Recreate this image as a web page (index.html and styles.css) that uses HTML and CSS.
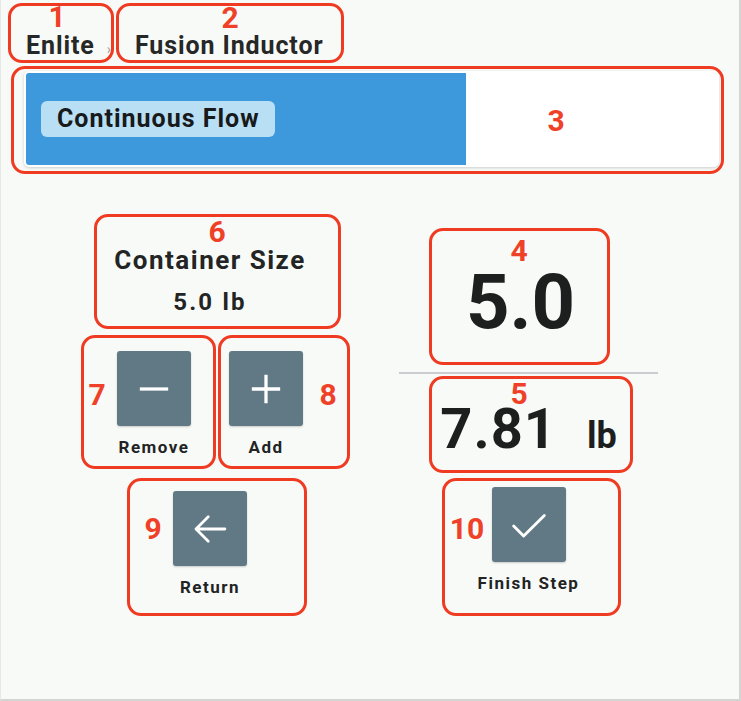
FILE: index.html
```html
<!DOCTYPE html>
<html lang="en">
<head>
<meta charset="utf-8">
<title>Continuous Flow</title>
<link rel="stylesheet" href="styles.css">
</head>
<body>
<div class="frame">
  <nav class="crumbs">
    <span class="crumb">Enlite</span>
    <span class="sep">›</span>
    <span class="crumb">Fusion Inductor</span>
  </nav>

  <div class="progress">
    <div class="fill" style="width:63.7%">
      <span class="chip">Continuous Flow</span>
    </div>
  </div>

  <main class="panel">
    <section class="col left">
      <div class="size">
        <div class="size-title">Container Size</div>
        <div class="size-value">5.0 lb</div>
      </div>
      <div class="btn-row">
        <div class="btn">
          <div class="sq">
            <svg viewBox="0 0 24 24" width="34" height="34"><path d="M2 12h20" stroke="#fff" stroke-width="2.3" fill="none"/></svg>
          </div>
          <div class="btn-label">Remove</div>
        </div>
        <div class="btn">
          <div class="sq">
            <svg viewBox="0 0 24 24" width="34" height="34"><path d="M2 12h20M12 2v20" stroke="#fff" stroke-width="2.3" fill="none"/></svg>
          </div>
          <div class="btn-label">Add</div>
        </div>
      </div>
      <div class="btn single">
        <div class="sq">
          <svg viewBox="0 0 24 24" width="42" height="42"><path d="M20.5 12H4M11 5l-7 7 7 7" stroke="#fff" stroke-width="1.6" fill="none" stroke-linecap="round" stroke-linejoin="round"/></svg>
        </div>
        <div class="btn-label">Return</div>
      </div>
    </section>

    <section class="col right">
      <div class="big">5.0</div>
      <div class="divider"></div>
      <div class="reading"><span class="num">7.81</span><span class="unit">lb</span></div>
      <div class="btn finish">
        <div class="sq">
          <svg viewBox="0 0 24 24" width="46" height="46"><path d="M4 12.5l5.2 5.2L20 7" stroke="#fff" stroke-width="1.5" fill="none" stroke-linecap="round" stroke-linejoin="round"/></svg>
        </div>
        <div class="btn-label">Finish Step</div>
      </div>
    </section>
  </main>

  <div class="marks">
    <div class="box b1"></div><span class="tag t1">1</span>
    <div class="box b2"></div><span class="tag t2">2</span>
    <div class="box b3"></div><span class="tag t3">3</span>
    <div class="box b4"></div><span class="tag t4">4</span>
    <div class="box b5"></div><span class="tag t5">5</span>
    <div class="box b6"></div><span class="tag t6">6</span>
    <div class="box b7"></div><span class="tag t7">7</span>
    <div class="box b8"></div><span class="tag t8">8</span>
    <div class="box b9"></div><span class="tag t9">9</span>
    <div class="box b10"></div><span class="tag t10">10</span>
  </div>
</div>
</body>
</html>
```

FILE: styles.css
```css
* { box-sizing: border-box; }
html, body { margin: 0; padding: 0; }
body {
  background: #ffffff;
  font-family: Roboto, "Liberation Sans", sans-serif;
  color: #1e1f1f;
}
.frame {
  position: relative;
  width: 741px;
  height: 701px;
  background: #f8faf8;
  border-right: 2px solid #d3d5d3;
  border-bottom: 2px solid #d3d5d3;
  border-left: 1px solid #e6e8e6;
  overflow: hidden;
}

/* breadcrumb */
.crumbs {
  display: flex;
  align-items: baseline;
  padding: 32px 0 0 25px;
  height: 71px;
}
.crumb {
  font-size: 25px;
  line-height: 27px;
  font-weight: 700;
  color: #262727;
  letter-spacing: 0.9px;
}
.sep {
  font-size: 14px;
  color: #9a9c9c;
  margin: 0 24px 0 12px;
}

/* progress */
.progress {
  margin: 0 0 0 23px;
  width: 695px;
  height: 96px;
  background: #ffffff;
  border-radius: 5px;
  padding: 2px;
  box-shadow: 0 1px 3px rgba(0,0,0,0.18);
}
.fill {
  height: 100%;
  background: #3d98dc;
  border-radius: 3px 0 0 3px;
  display: flex;
  align-items: center;
  padding-left: 15px;
}
.chip {
  background: #b8dff4;
  border-radius: 6px;
  padding: 0 15px 0 16px;
  height: 36px;
  line-height: 36px;
  font-size: 25px;
  font-weight: 700;
  color: #17191a;
  letter-spacing: 1px;
}

/* main panel */
.panel {
  display: grid;
  grid-template-columns: 372px 259px;
  column-gap: 3px;
  margin-left: 23px;
}
.col {
  display: flex;
  flex-direction: column;
  align-items: center;
}
.left { padding-top: 79px; }
.size { text-align: center; }
.size-title {
  font-size: 26px;
  line-height: 29px;
  font-weight: 700;
  color: #232424;
  letter-spacing: 1.5px;
}
.size-value {
  margin-top: 14px;
  font-size: 24px;
  line-height: 27px;
  font-weight: 700;
  color: #232424;
  letter-spacing: 2.2px;
}
.btn-row {
  display: flex;
  gap: 38px;
  margin-top: 35px;
}
.btn {
  display: flex;
  flex-direction: column;
  align-items: center;
  width: 74px;
}
.sq {
  width: 74px;
  height: 75px;
  background: #607985;
  border-radius: 3px;
  box-shadow: 0 1px 2px rgba(0,0,0,0.2);
  display: flex;
  align-items: center;
  justify-content: center;
}
.btn-label {
  margin-top: 11px;
  font-size: 17px;
  line-height: 20px;
  font-weight: 700;
  color: #222323;
  white-space: nowrap;
  letter-spacing: 1.5px;
}
.btn.single { margin-top: 34px; }

.right { padding-top: 97px; }
.big {
  font-size: 76px;
  line-height: 76px;
  font-weight: 700;
  color: #1d1e1e;
  margin-left: -16px;
}
.divider {
  margin-top: 32px;
  width: 100%;
  height: 2px;
  background: #c9cdd0;
}
.reading {
  margin-top: 27px;
  display: flex;
  align-items: baseline;
  gap: 30px;
  line-height: 56px;
  color: #1d1e1e;
  font-weight: 700;
}
.num { font-size: 56px; letter-spacing: 1px; }
.unit { font-size: 36px; }
.btn.finish { margin-top: 23px; width: 110px; }

/* annotation overlay */
.marks { position: absolute; inset: 0; pointer-events: none; }
.box {
  position: absolute;
  border: 3px solid #ef3b22;
  border-radius: 14px;
}
.b1 { left: 7px; top: 3px; width: 106px; height: 60px; }
.b2 { left: 115px; top: 3px; width: 228px; height: 60px; }
.b3 { left: 10px; top: 66px; width: 713px; height: 108px; }
.b4 { left: 428px; top: 228px; width: 181px; height: 137px; }
.b5 { left: 428px; top: 376px; width: 204px; height: 97px; }
.b6 { left: 93px; top: 214px; width: 247px; height: 115px; }
.b7 { left: 80px; top: 335px; width: 135px; height: 134px; }
.b8 { left: 217px; top: 335px; width: 132px; height: 134px; }
.b9 { left: 126px; top: 478px; width: 180px; height: 138px; }
.b10 { left: 441px; top: 478px; width: 179px; height: 138px; }
.tag {
  position: absolute;
  font-family: Roboto, "Liberation Sans", sans-serif;
  font-weight: 700;
  font-size: 30px;
  line-height: 22px;
  color: #ef4128;
  transform: translate(-50%, -50%);
}
.t1 { left: 56px; top: 17px; }
.t2 { left: 229px; top: 18px; }
.t3 { left: 555px; top: 121px; }
.t4 { left: 518px; top: 251px; }
.t5 { left: 518px; top: 394px; }
.t6 { left: 216px; top: 232px; }
.t7 { left: 96px; top: 395px; }
.t8 { left: 327px; top: 395px; }
.t9 { left: 152px; top: 529px; }
.t10 { left: 466px; top: 529px; }
```
